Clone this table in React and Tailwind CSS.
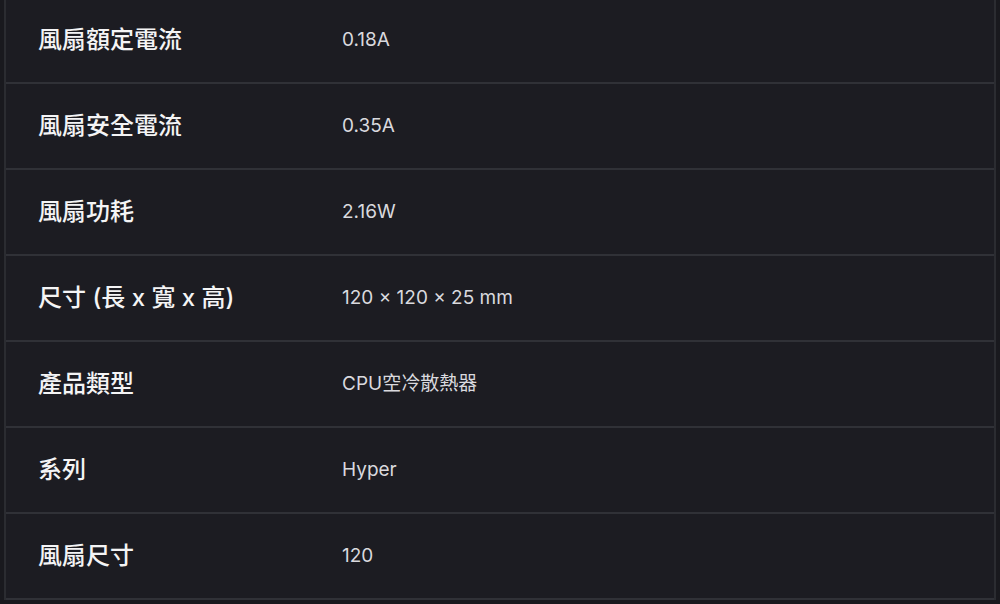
import React from 'react';

const specs = [
  { label: '風扇額定電流', value: '0.18A' },
  { label: '風扇安全電流', value: '0.35A' },
  { label: '風扇功耗', value: '2.16W' },
  { label: '尺寸 (長 x 寬 x 高)', value: '120 × 120 × 25 mm' },
  { label: '產品類型', value: 'CPU空冷散熱器' },
  { label: '系列', value: 'Hyper' },
  { label: '風扇尺寸', value: '120' },
];

const SpecRow = ({ label, value }) => (
  <div className="grid grid-cols-[304px_1fr] items-center h-[86px] border-b-2 border-[#303137]">
    <div className="pl-8 text-[24px] font-medium text-[#f4f4f5]">{label}</div>
    <div className="pl-8 text-[19px] text-[#d9d9de]">{value}</div>
  </div>
);

export default function App() {
  return (
    <div
      className="w-[1000px] h-[604px] overflow-hidden bg-[#19191e] pl-1 pr-[4px]"
      style={{ fontFamily: 'Inter, "Noto Sans CJK TC", sans-serif' }}
    >
      <div className="-mt-[4px] border-x-2 border-t-2 border-[#2b2c31] bg-[#1c1c22]">
        {specs.map((s) => (
          <SpecRow key={s.label} label={s.label} value={s.value} />
        ))}
      </div>
    </div>
  );
}
